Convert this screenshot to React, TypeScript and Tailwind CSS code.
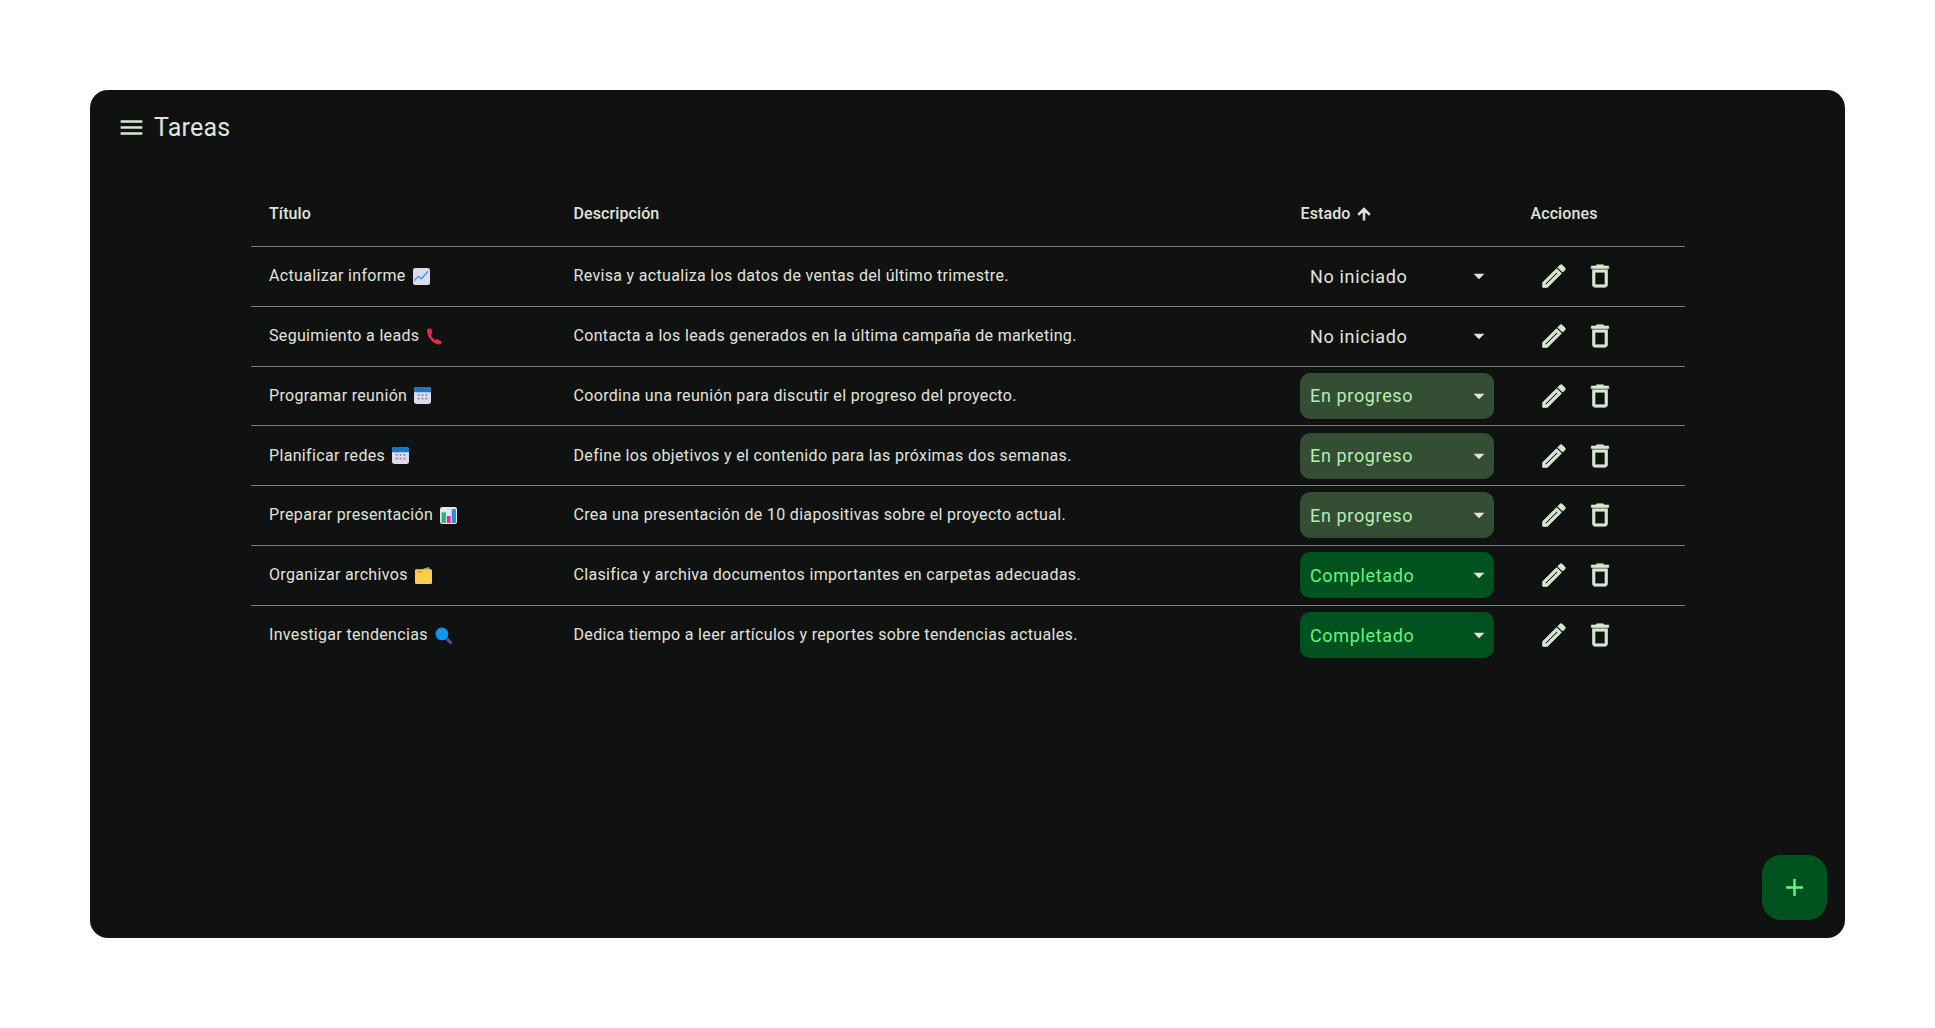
const P = {
  menu: "M3 18h18v-2H3v2zm0-5h18v-2H3v2zm0-7v2h18V6H3z",
  up: "M4 12l1.41 1.41L11 7.83V20h2V7.83l5.58 5.59L20 12l-8-8-8 8z",
  drop: "M7 10l5 5 5-5z",
  edit: "M3 17.25V21h3.75L17.81 9.94l-3.75-3.75L3 17.25zM5.92 19H5v-.92l9.06-9.06.92.92L5.92 19zM20.71 5.63l-2.34-2.34c-.2-.2-.45-.29-.71-.29s-.51.1-.7.29l-1.83 1.83 3.75 3.75 1.83-1.83c.39-.39.39-1.02 0-1.41z",
  trash: "M16 9v10H8V9h8m-1.5-6h-5l-1 1H5v2h14V4h-3.5l-1-1zM18 7H6v12c0 1.1.9 2 2 2h8c1.1 0 2-.9 2-2V7z",
  add: "M19 13h-6v6h-2v-6H5v-2h6V5h2v6h6v2z",
};

function Ic({ d, className, bold = 0 }: { d: string; className: string; bold?: number }) {
  return (
    <svg viewBox="0 0 24 24" fill="currentColor" stroke="currentColor" strokeWidth={bold} className={className}>
      <path d={d} />
    </svg>
  );
}

function Emoji({ name }: { name: string }) {
  const c = "ml-[7px] w-[17px] h-[17px] shrink-0";
  if (name === "chart")
    return (
      <svg viewBox="0 0 16 16" className={c}>
        <rect width="16" height="16" rx="2" fill="#dcdcec" />
        <path d="M1 12 5 8l3 2 6-7" fill="none" stroke="#4aa3e8" strokeWidth="1.6" />
      </svg>
    );
  if (name === "phone")
    return (
      <svg viewBox="0 0 16 16" className={c}>
        <path d="M1.5 1 5 .5l1 4.5-1.4 1c.7 2.4 2.2 4.2 4.4 5.4l1.5-1.1 4.5 2.6-.8 2c-.3.4-.8.6-1.4.6C6.500 15 1.500 9 1 3c0-1 .1-1.700.5-2z" fill="#e8284a" />
      </svg>
    );
  if (name === "cal")
    return (
      <svg viewBox="0 0 16 16" className={c}>
        <rect width="16" height="16" rx="2.5" fill="#dedcec" />
        <path d="M0 5V2.500A2.500 2.500 0 0 1 2.500 0h11A2.500 2.500 0 0 1 16 2.500V5z" fill="#1479c4" />
        <path d="M3.500 6.500h1.800v1.800H3.500zM7.100 6.500h1.800v1.800H7.100zM10.700 6.500h1.800v1.800h-1.800zM3.500 10h1.800v1.800H3.500zM7.100 10h1.800v1.800H7.100zM10.700 10h1.800v1.800h-1.800z" fill="#8a8aa8" />
      </svg>
    );
  if (name === "bars")
    return (
      <svg viewBox="0 0 16 16" className={c}>
        <rect width="16" height="16" rx="2" fill="#dfe6ee" />
        <rect x="1.500" y="5" width="4" height="10" fill="#22b573" />
        <rect x="6.500" y="8.500" width="3.500" height="6.500" fill="#e8288a" />
        <rect x="11" y="2" width="4" height="13" fill="#2b8fe0" />
      </svg>
    );
  if (name === "folder")
    return (
      <svg viewBox="0 0 16 16" className={c}>
        <path d="M8 1.500 13 0l1.500 3H8z" fill="#6db36a" />
        <rect y="2" width="16" height="14" rx="1.200" fill="#f8cf4a" />
        <path d="M2 4h4.500v1.200H2z" fill="#ef7f3a" />
      </svg>
    );
  return (
    <svg viewBox="0 0 16 16" className={c}>
      <path d="M10 10l4.500 4.500" stroke="#5b4a8f" strokeWidth="3" strokeLinecap="round" />
      <circle cx="6.500" cy="6.500" r="6" fill="#0b97ec" />
    </svg>
  );
}

const rows = [
  ["Actualizar informe", "chart", "Revisa y actualiza los datos de ventas del último trimestre.", "n"],
  ["Seguimiento a leads", "phone", "Contacta a los leads generados en la última campaña de marketing.", "n"],
  ["Programar reunión", "cal", "Coordina una reunión para discutir el progreso del proyecto.", "p"],
  ["Planificar redes", "cal", "Define los objetivos y el contenido para las próximas dos semanas.", "p"],
  ["Preparar presentación", "bars", "Crea una presentación de 10 diapositivas sobre el proyecto actual.", "p"],
  ["Organizar archivos", "folder", "Clasifica y archiva documentos importantes en carpetas adecuadas.", "c"],
  ["Investigar tendencias", "search", "Dedica tiempo a leer artículos y reportes sobre tendencias actuales.", "c"],
];

function Status({ s }: { s: string }) {
  const style =
    s === "n"
      ? "text-[#e2e3dd]"
      : s === "p"
        ? "bg-[#334e33] text-[#b6eeb4]"
        : "bg-[#00531f] text-[#62f585]";
  const label = s === "n" ? "No iniciado" : s === "p" ? "En progreso" : "Completado";
  return (
    <div className={`w-[194px] h-[46px] rounded-[10px] pl-[10px] pr-[2px] flex items-center justify-between text-[18px] tracking-[0.65px] ${style}`}>
      <span>{label}</span>
      <Ic d={P.drop} className="w-[26px] h-[26px] text-[#e2e3dd]" />
    </div>
  );
}

const cols = "grid grid-cols-[304px_727px_230px_173px] items-center";

export default function App() {
  return (
    <div className="min-h-[1028px] bg-white px-[90px] pt-[90px] font-['Roboto',sans-serif]">
      <div className="relative h-[848px] rounded-[18px] bg-[#0f1211] text-[#e2e3dd]">
        <div className="flex items-center h-[75px] pl-[27px]">
          <Ic d={P.menu} className="w-[29px] h-[29px] text-[#d5e8d0]" />
          <h1 className="ml-[8px] text-[25px] font-normal tracking-[0.2px]">Tareas</h1>
        </div>
        <div className="ml-[161px] mr-[160px] mt-[25px]">
          <div className={`${cols} h-[57px] pb-[8px] border-b border-[#787d75] text-[16px] font-medium tracking-[0.1px]`}>
            <div className="pl-[18px]">Título</div>
            <div className="pl-[18.5px]">Descripción</div>
            <div className="pl-[18.5px] flex items-center gap-[5px]">
              Estado <Ic d={P.up} bold={1.4} className="w-[18px] h-[18px]" />
            </div>
            <div className="pl-[18.5px]">Acciones</div>
          </div>
          {rows.map((r, i) => (
            <div key={r[0]} className={`${cols} h-[59.75px] text-[16px] tracking-[0.33px] ${i < rows.length - 1 ? "border-b border-[#787d75]" : ""}`}>
              <div className="pl-[18px] flex items-center">
                {r[0]}
                <Emoji name={r[1]} />
              </div>
              <div className="pl-[18.5px]">{r[2]}</div>
              <div className="pl-[18px]">
                <Status s={r[3]} />
              </div>
              <div className="pl-[27px] flex items-center gap-[16px] text-[#d5e8d0]">
                <Ic d={P.edit} bold={0.8} className="w-[30px] h-[30px]" />
                <Ic d={P.trash} bold={0.5} className="w-[30px] h-[30px]" />
              </div>
            </div>
          ))}
        </div>
        <button className="absolute right-[18px] bottom-[18px] w-[65px] h-[65px] rounded-[19px] bg-[#00531f] flex items-center justify-center text-[#62f585]">
          <Ic d={P.add} className="w-[29px] h-[29px]" />
        </button>
      </div>
    </div>
  );
}
